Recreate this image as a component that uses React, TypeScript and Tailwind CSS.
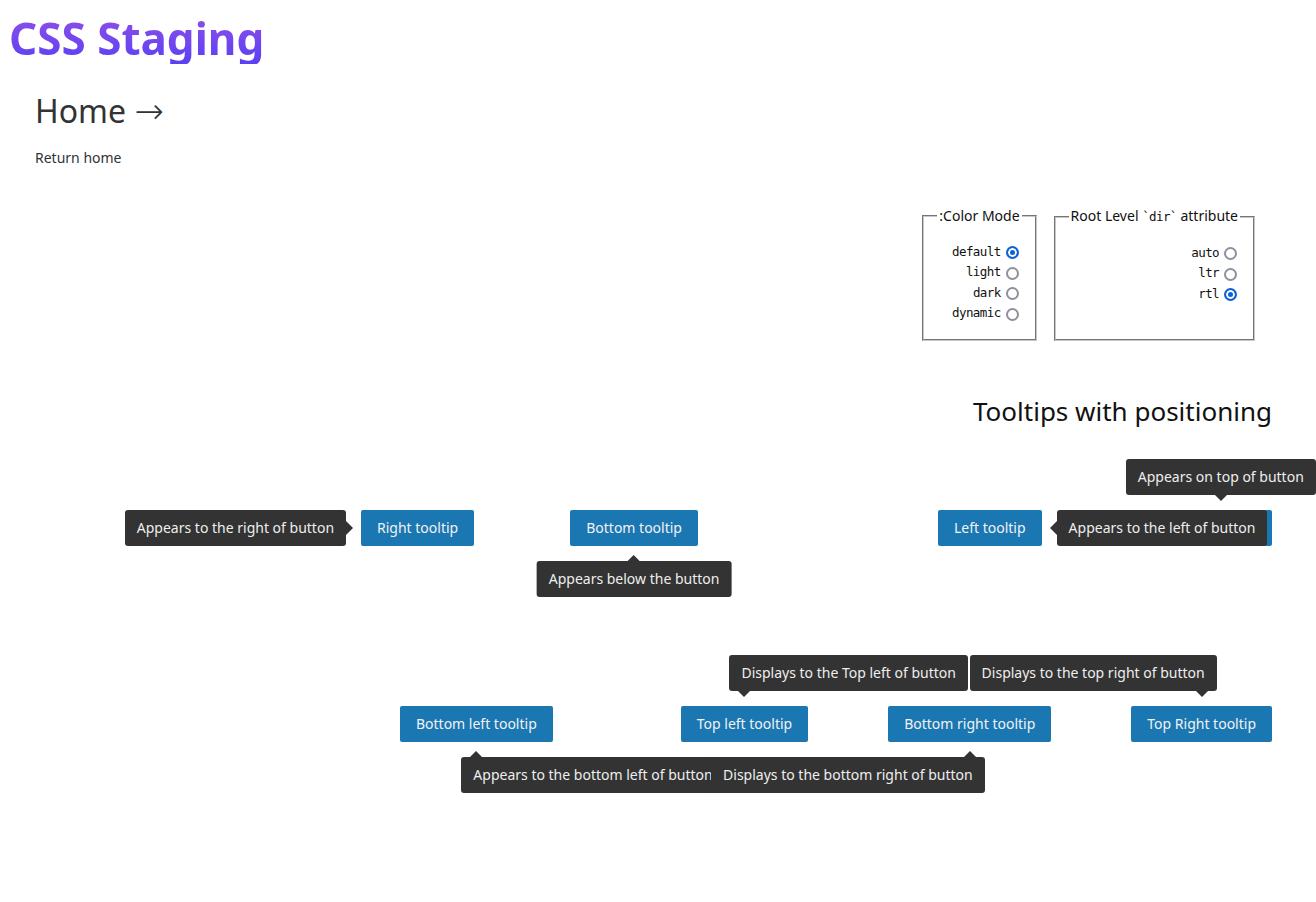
import React from "react";

type Placement =
  | "top"
  | "bottom"
  | "left"
  | "right"
  | "top-left"
  | "top-right"
  | "bottom-left"
  | "bottom-right";

// physical placement of the bubble around the button
const bubbleClass: Record<Placement, string> = {
  top: "bottom-full mb-[15px] left-1/2 -translate-x-1/2",
  bottom: "top-full mt-[15px] left-1/2 -translate-x-1/2",
  left: "left-full ml-[15px] top-0",
  right: "right-full mr-[15px] top-0",
  "top-left": "bottom-full mb-[15px] left-1/2 -ml-[15px]",
  "top-right": "bottom-full mb-[15px] right-1/2 -mr-[15px]",
  "bottom-left": "top-full mt-[15px] left-1/2 -ml-[15px]",
  "bottom-right": "top-full mt-[15px] right-1/2 -mr-[15px]",
};

const arrowClass: Record<Placement, string> = {
  top: "top-full left-1/2 -translate-x-1/2 border-x-[6px] border-t-[6px] border-x-transparent border-t-[#333]",
  bottom:
    "bottom-full left-1/2 -translate-x-1/2 border-x-[6px] border-b-[6px] border-x-transparent border-b-[#333]",
  left: "right-full top-1/2 -translate-y-1/2 border-y-[7px] border-r-[7px] border-y-transparent border-r-[#333]",
  right:
    "left-full top-1/2 -translate-y-1/2 border-y-[7px] border-l-[7px] border-y-transparent border-l-[#333]",
  "top-left":
    "top-full left-[15px] -translate-x-1/2 border-x-[6px] border-t-[6px] border-x-transparent border-t-[#333]",
  "top-right":
    "top-full right-[15px] translate-x-1/2 border-x-[6px] border-t-[6px] border-x-transparent border-t-[#333]",
  "bottom-left":
    "bottom-full left-[15px] -translate-x-1/2 border-x-[6px] border-b-[6px] border-x-transparent border-b-[#333]",
  "bottom-right":
    "bottom-full right-[15px] translate-x-1/2 border-x-[6px] border-b-[6px] border-x-transparent border-b-[#333]",
};

interface TipButtonProps {
  label: string;
  tip: string;
  placement: Placement;
  className?: string;
  top?: boolean;
}

const TipButton: React.FC<TipButtonProps> = ({
  label,
  tip,
  placement,
  className = "",
  top,
}) => {
  return (
    <div className={`relative shrink-0 ${className}`}>
      <button className="h-9 px-4 rounded-[2px] bg-[#1b77b2] text-sm text-[#f2f2f2] whitespace-nowrap">
        {label}
      </button>
      <div
        dir="ltr"
        className={`absolute ${top ? "z-20" : "z-10"} ${bubbleClass[placement]} h-9 px-3 flex items-center rounded-[3px] bg-[#333] text-sm text-[#eee] whitespace-nowrap`}
      >
        {tip}
        <span className={`absolute w-0 h-0 ${arrowClass[placement]}`} />
      </div>
    </div>
  );
};

interface RadioGroupProps {
  legend: React.ReactNode;
  name: string;
  options: string[];
  checked: string;
}

const mono = "font-['DejaVu_Sans_Mono',monospace] text-[12.5px] tracking-[-0.6px]";

const RadioGroup: React.FC<RadioGroupProps> = ({
  legend,
  name,
  options,
  checked,
}) => (
  <fieldset className="border-2 [border-style:groove] border-[#c8c8c8] px-[13px] pt-4 pb-[15px]">
    <legend className="px-[2px] text-sm leading-5 text-[#111]">{legend}</legend>
    <div className="flex flex-col">
      {options.map((opt) => (
        <div key={opt} className="h-[20.5px] flex items-center">
          <input
            id={`${name}-${opt}`}
            type="radio"
            name={name}
            defaultChecked={opt === checked}
            className="appearance-none shrink-0 w-[13px] h-[13px] ml-[5px] mr-[3px] mt-[1px] rounded-full border-2 border-[#8f8f9d] bg-white checked:border-[#0b61d8] checked:bg-[#0b61d8] checked:shadow-[inset_0_0_0_2px_#fff]"
          />
          <label htmlFor={`${name}-${opt}`} className={`${mono} text-[#111]`}>
            {opt}
          </label>
        </div>
      ))}
    </div>
  </fieldset>
);

export default function App() {
  return (
    <div className="min-h-screen overflow-x-hidden bg-white font-['Noto_Sans',sans-serif] text-[#333]">
      <header className="px-[9px] pt-[12px]">
        <h1 className="inline-block text-[44px] leading-[52px] font-bold bg-linear-to-b from-[#904ee8] to-[#5a3ff4] bg-clip-text text-transparent">
          CSS Staging
        </h1>
      </header>

      <div className="px-[35px]">
        <h2 className="mt-[27px] h-10 text-[32px] leading-10 text-[#333]">
          Home{" "}
          <span className="font-['DejaVu_Sans',sans-serif] font-extralight text-[35px] leading-none">
            →
          </span>
        </h2>
        <p className="mt-[17px] text-sm leading-5">Return home</p>
      </div>

      <main dir="rtl" className="pl-[35px] pr-[44px]">
        <div className="mt-[38px] mr-[17px] flex items-stretch gap-[17px]">
          <RadioGroup
            legend={
              <>
                Root Level <span className={mono}>`dir`</span> attribute
              </>
            }
            name="dir"
            options={["auto", "ltr", "rtl"]}
            checked="rtl"
          />
          <RadioGroup
            legend="Color Mode:"
            name="color-mode"
            options={["default", "light", "dark", "dynamic"]}
            checked="default"
          />
        </div>

        <h3 className="mt-[52px] text-[26px] leading-9 text-[#111]">
          Tooltips with positioning
        </h3>

        <div className="mt-[81px] flex items-center">
          <TipButton label="Top tooltip" tip="Appears on top of button" placement="top" />
          <TipButton
            label="Left tooltip"
            tip="Appears to the left of button"
            placement="left"
            className="mr-[128px]"
          />
          <TipButton
            label="Bottom tooltip"
            tip="Appears below the button"
            placement="bottom"
            className="mr-[240px]"
          />
          <TipButton
            label="Right tooltip"
            tip="Appears to the right of button"
            placement="right"
            className="mr-[96px]"
          />
        </div>

        <div className="mt-[160px] flex items-center">
          <TipButton
            label="Top Right tooltip"
            tip="Displays to the top right of button"
            placement="top-right"
          />
          <TipButton
            label="Bottom right tooltip"
            tip="Displays to the bottom right of button"
            placement="bottom-right"
            className="mr-[80px]"
            top
          />
          <TipButton
            label="Top left tooltip"
            tip="Displays to the Top left of button"
            placement="top-left"
            className="mr-[80px]"
          />
          <TipButton
            label="Bottom left tooltip"
            tip="Appears to the bottom left of button"
            placement="bottom-left"
            className="mr-[128px]"
          />
        </div>
      </main>
    </div>
  );
}
